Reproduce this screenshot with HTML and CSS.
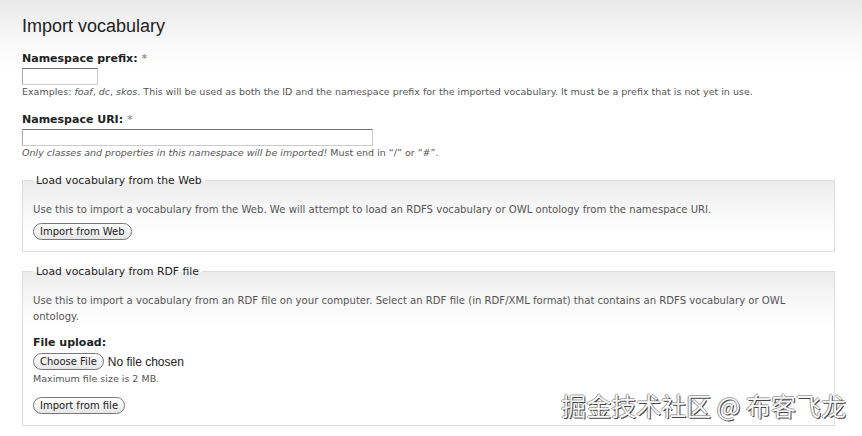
FILE: index.html
```html
<!DOCTYPE html>
<html lang="en">

<head>
    <meta charset="UTF-8">
    <title>Import vocabulary</title>
    <link rel="stylesheet" href="styles.css">
</head>

<body>
    <main class="page">
        <h1>Import vocabulary</h1>

        <div class="field">
            <label class="label">Namespace prefix: <span class="req">*</span></label>
            <input type="text" class="text short">
            <p class="desc">Examples: <em>foaf</em>, <em>dc</em>, <em>skos</em>. This will be used as both the ID and the namespace prefix for the imported vocabulary. It must be a prefix that is not yet in use.</p>
        </div>

        <div class="field">
            <label class="label">Namespace URI: <span class="req">*</span></label>
            <input type="text" class="text long">
            <p class="desc"><em>Only classes and properties in this namespace will be imported!</em> Must end in “/” or “#”.</p>
        </div>

        <fieldset class="box">
            <legend>Load vocabulary from the Web</legend>
            <p class="info">Use this to import a vocabulary from the Web. We will attempt to load an RDFS vocabulary or OWL ontology from the namespace URI.</p>
            <button class="btn">Import from Web</button>
        </fieldset>

        <fieldset class="box">
            <legend>Load vocabulary from RDF file</legend>
            <p class="info">Use this to import a vocabulary from an RDF file on your computer. Select an RDF file (in RDF/XML format) that contains an RDFS vocabulary or OWL ontology.</p>
            <div class="upload">
                <label class="label">File upload:</label>
                <div class="file-row">
                    <span class="btn">Choose File</span>
                    <span class="chosen">No file chosen</span>
                </div>
                <p class="desc">Maximum file size is 2 MB.</p>
            </div>
            <button class="btn">Import from file</button>
        </fieldset>
    </main>

    <div class="mark">掘金技术社区 @ 布客飞龙</div>
</body>

</html>
```

FILE: styles.css
```css
* {
    box-sizing: border-box;
    margin: 0;
    padding: 0;
}

body {
    width: 862px;
    height: 436px;
    overflow: hidden;
    position: relative;
    font-family: 'DejaVu Sans', Verdana, sans-serif;
    color: #333;
    background: linear-gradient(#e9e9e9 0px, #f8f8f8 40px, #fff 70px);
}

.page {
    padding: 14px 27px 0 22px;
}

h1 {
    font-family: 'Liberation Sans', Arial, sans-serif;
    font-weight: normal;
    font-size: 18px;
    color: #222;
    line-height: 24px;
    margin-bottom: 14px;
}

.field {
    display: flex;
    flex-direction: column;
    align-items: flex-start;
    margin-bottom: 15px;
}

.label {
    display: block;
    font-weight: bold;
    font-size: 11px;
    color: #222;
    line-height: 14px;
    margin-bottom: 2px;
}

.req {
    color: #999;
}

.text {
    height: 17px;
    border: 1px solid #999;
    border-color: #777 #ccc #ccc #aaa;
    background: #fff;
}

.short {
    width: 76px;
}

.long {
    width: 351px;
}

.desc {
    font-size: 9.5px;
    color: #555;
    line-height: 12px;
    margin-top: 1px;
}

.box {
    border: 1px solid #ddd;
    background: linear-gradient(#ececec 0px, #f8f8f8 30px, #fff 55px);
    padding: 15px 10px 11px 10px;
    margin-bottom: 13px;
    display: flex;
    flex-direction: column;
    align-items: flex-start;
}

.box legend {
    font-size: 10.8px;
    color: #222;
    padding: 0 3px;
}

.info {
    font-size: 10.1px;
    color: #555;
    line-height: 16px;
    margin-bottom: 5px;
}

.btn {
    font-family: 'DejaVu Sans', Verdana, sans-serif;
    font-size: 10px;
    color: #222;
    height: 17px;
    padding: 0 6px;
    border: 1px solid #777;
    border-radius: 9px;
    background: linear-gradient(#fff, #e6e6e6);
    display: inline-flex;
    align-items: center;
}

.upload {
    margin-top: 6px;
    margin-bottom: 12px;
}

.upload .label {
    margin-bottom: 3px;
}

.upload .desc {
    margin-top: 3px;
}

.file-row {
    display: flex;
    align-items: center;
    gap: 4px;
}

.chosen {
    font-family: 'Liberation Sans', Arial, sans-serif;
    font-size: 12px;
    color: #222;
}

.mark {
    position: absolute;
    right: 16px;
    top: 387px;
    font-family: 'Noto Sans CJK SC', sans-serif;
    font-size: 25px;
    color: #f6f6f6;
    text-shadow: 1px 1px 0 #444, -1px 0 0 #999, 0 -1px 0 #aaa;
}
```
